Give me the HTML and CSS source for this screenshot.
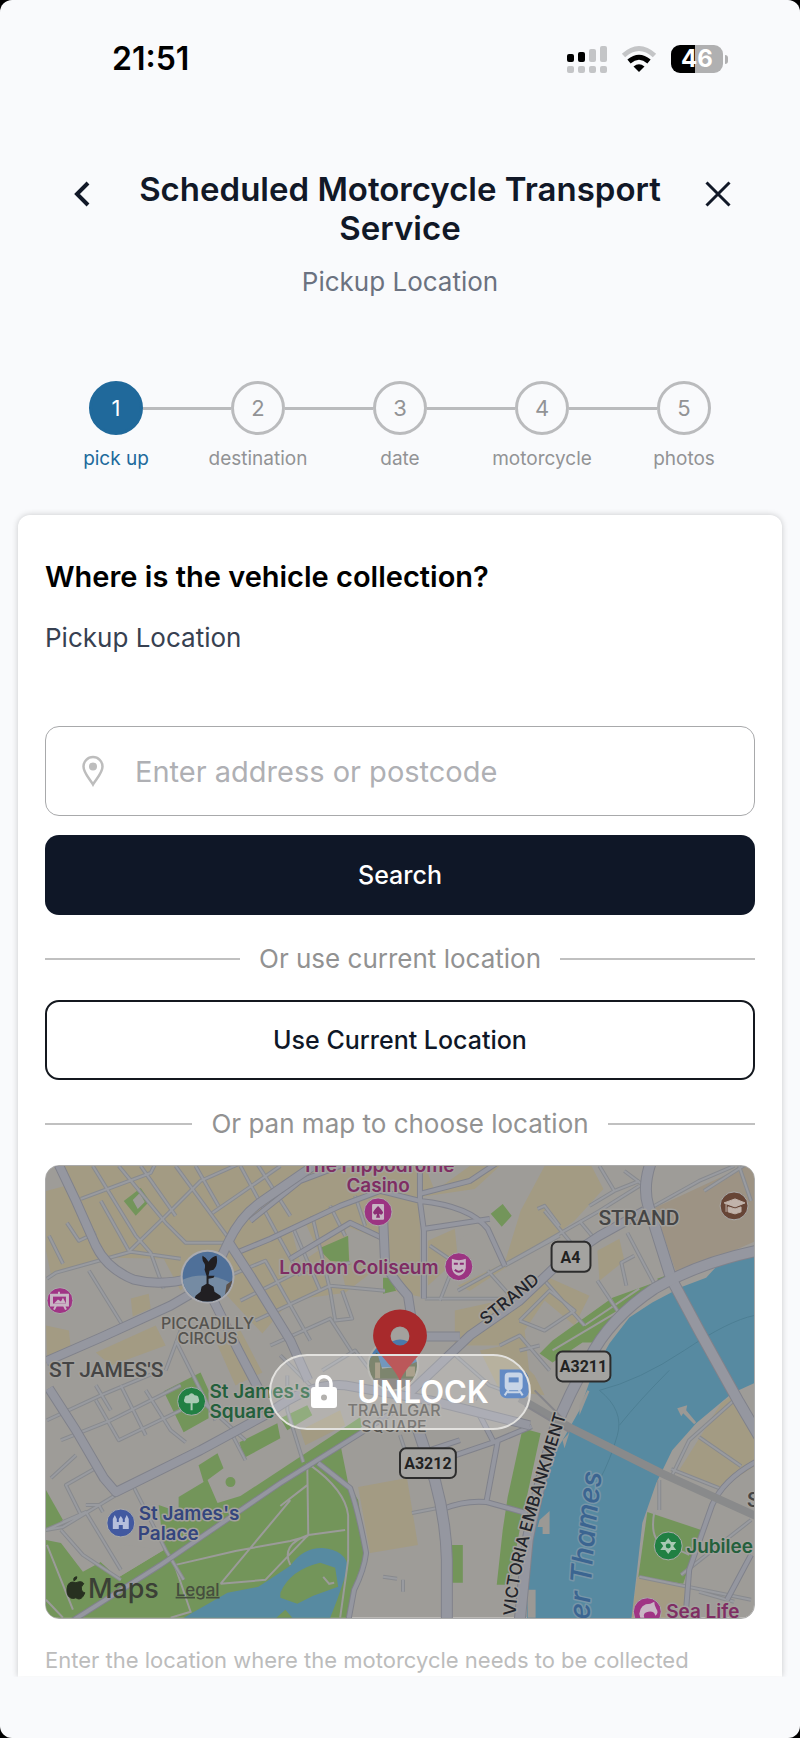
FILE: index.html
```html
<!DOCTYPE html>
<html lang="en">
<head>
<meta charset="utf-8">
<meta name="viewport" content="width=device-width, initial-scale=1">
<title>Scheduled Motorcycle Transport Service</title>
<link rel="stylesheet" href="styles.css">
</head>
<body>
<div class="screen">
  <div class="status">
    <span class="clock">21:51</span>
    <div class="status-icons">
      <svg width="40" height="28" viewBox="0 0 40 28" aria-hidden="true">
        <g fill="#000"><rect x="0" y="9" width="7" height="8" rx="2"/><rect x="11" y="7" width="7" height="10" rx="2"/></g>
        <g fill="#c4c5c7"><rect x="22" y="4" width="7" height="13" rx="2"/><rect x="33" y="1" width="7" height="16" rx="2"/>
        <rect x="0" y="21" width="7" height="7" rx="2"/><rect x="11" y="21" width="7" height="7" rx="2"/><rect x="22" y="21" width="7" height="7" rx="2"/><rect x="33" y="21" width="7" height="7" rx="2"/></g>
      </svg>
      <svg width="36" height="28" viewBox="0 0 36 28" aria-hidden="true" fill="none">
        <path d="M2.500 10.500Q18-3.500 33.500 10.500" stroke="#c4c5c7" stroke-width="5"/>
        <path d="M8 16.500Q18 8 28 16.500" stroke="#000" stroke-width="5"/>
        <path d="M18 27L12.500 21.500Q18 17 23.500 21.500Z" fill="#000"/>
      </svg>
      <div class="battery"><span class="battery-body">46</span><span class="battery-tip"></span></div>
    </div>
  </div>

  <header class="header">
    <button class="icon-btn" aria-label="Back"><svg width="18" height="28" viewBox="0 0 18 28"><path d="M15 3L4 14l11 11" fill="none" stroke="#111827" stroke-width="4"/></svg></button>
    <div class="titles">
      <h1>Scheduled Motorcycle Transport Service</h1>
      <p>Pickup Location</p>
    </div>
    <button class="icon-btn" aria-label="Close"><svg width="28" height="28" viewBox="0 0 28 28"><path d="M2.500 2.500l23 23M25.500 2.500l-23 23" fill="none" stroke="#111827" stroke-width="3"/></svg></button>
  </header>

  <ol class="steps">
    <li class="step current" aria-current="step"><span class="dot">1</span><span class="step-name">pick up</span></li>
    <li class="step"><span class="dot">2</span><span class="step-name">destination</span></li>
    <li class="step"><span class="dot">3</span><span class="step-name">date</span></li>
    <li class="step"><span class="dot">4</span><span class="step-name">motorcycle</span></li>
    <li class="step"><span class="dot">5</span><span class="step-name">photos</span></li>
  </ol>

  <main class="card">
    <h2>Where is the vehicle collection?</h2>
    <label class="field-label" for="address">Pickup Location</label>
    <div class="field">
      <svg width="24" height="32" viewBox="0 0 24 32" aria-hidden="true"><path d="M12 29.500C9 24 2.500 18 2.500 11.500a9.500 9.500 0 0 1 19 0C21.500 18 15 24 12 29.500Z" fill="none" stroke="#bdbdbd" stroke-width="2.500"/><circle cx="12" cy="11.500" r="4" fill="#bdbdbd"/></svg>
      <input id="address" type="text" placeholder="Enter address or postcode">
    </div>
    <button class="btn primary">Search</button>
    <div class="divider">Or use current location</div>
    <button class="btn outline">Use Current Location</button>
    <div class="divider">Or pan map to choose location</div>

    <div class="map">
      <svg class="map-art" viewBox="45 1165 710 453" role="img" aria-label="Map of central London">
        <defs>
          <g id="major">
            <path d="M56 1160L75 1200L95 1245Q106 1268 133 1279Q160 1286 192 1277"/>
            <path d="M45 1361L100 1337L170 1305L208 1283L228 1241Q240 1215 262 1200L320 1160"/>
            <path d="M228 1241L250 1275L290 1340L308 1380"/>
            <path d="M213 1300L238 1350L260 1392"/>
            <path d="M48 1388L75 1430L103 1478L115 1492L200 1450L270 1412Q310 1382 345 1385L430 1400L530 1425"/>
            <path d="M383 1215L385 1262Q390 1275 408 1295L415 1340"/>
            <path d="M410 1392L470 1335L520 1300L560 1262L600 1235L645 1210"/>
            <path d="M415 1336H460"/>
          </g>
          <g id="wide">
            <path d="M652 1160Q643 1185 649 1205L672 1278L700 1330L740 1402L760 1436"/>
            <path d="M415 1420L435 1480Q446 1520 447 1560V1622"/>
            <path d="M758 1250Q700 1262 655 1288Q610 1318 590 1358Q570 1392 555 1430Q540 1480 528 1540L520 1622"/>
          </g>
          <g id="medium">
            <path d="M70 1622L160 1565L280 1483L365 1430L395 1410"/>
            <path d="M318 1463L350 1488Q358 1510 366 1553Q364 1570 354 1590L348 1622"/>
            <path d="M760 1460Q725 1478 713 1505L690 1570L686 1622M752 1555L728 1600"/>
            <path d="M443 1509Q465 1500 487 1502L530 1514M498 1441L487 1500M532 1426L494 1442L450 1457M494 1442L480 1415M460 1440L430 1450"/>
            <path d="M420 1160V1200L424 1230V1298M340 1165L300 1180L250 1220M420 1200L380 1190L340 1205L270 1238L236 1252M420 1200Q470 1205 488 1228L505 1265"/>
            <path d="M420 1193L470 1180L500 1160M425 1228L490 1218M384 1238L350 1222L290 1258"/>
          </g>
          <g id="minor">
            <path d="M92 1165L135 1235L150 1252L163 1288M46 1278L55 1272L130 1251L180 1258M80 1198L150 1172L156 1160M128 1251L165 1215L200 1180L245 1160"/>
            <path d="M118 1165L165 1222L185 1242H228M140 1165L175 1215M175 1165L230 1240M195 1165L218 1205M240 1165L275 1230L300 1275M255 1160L290 1215M212 1212L280 1165M100 1200L128 1250M48 1235L62 1263M66 1222L78 1240L95 1232M88 1270L122 1325M205 1285L265 1260L310 1340M240 1300L300 1270L350 1262M255 1320L330 1285L385 1290M270 1345L330 1318L352 1352M292 1225L320 1290M312 1215L330 1290L335 1320L352 1318L342 1290M355 1195L365 1225M330 1205L345 1235"/>
            <path d="M425 1298H510M455 1262L440 1300M455 1262L430 1245M458 1290L530 1250L600 1210L640 1185M488 1270L515 1300M505 1265L560 1235M545 1210L578 1250M538 1208L545 1205L560 1225M600 1165L615 1190L590 1205M615 1190L640 1180M625 1170L645 1185M580 1220L595 1238L575 1245M628 1232L655 1283M635 1255L622 1262L627 1285M598 1280L618 1310M655 1205L700 1180L735 1165M705 1190L752 1160M740 1165L752 1200M520 1320L550 1290L575 1310L545 1330L520 1320M545 1280L585 1325M500 1345L520 1335L550 1370M520 1350L540 1345M450 1350L490 1385L530 1400M480 1385L475 1400"/>
            <path d="M46 1420L100 1395L160 1370M60 1440L110 1420L180 1385M75 1455L50 1478M95 1400L118 1440L180 1410M120 1385L145 1435M145 1390L170 1430L185 1442M100 1465L65 1485L80 1515L45 1530M85 1505H98L102 1512M45 1530L62 1527L115 1495M60 1530L82 1555L120 1580M62 1522L85 1512L120 1570M133 1487L165 1550L183 1580M95 1385L110 1410M180 1330L165 1370M175 1340L215 1420M200 1400L245 1440M232 1435L245 1460M287 1375V1410L303 1462M280 1355L310 1385M400 1435L405 1450M412 1513L443 1507M383 1577L397 1579M403 1580V1592M322 1370L355 1350L370 1370"/>
            <path d="M673 1475L690 1440L735 1400M700 1437L742 1466M660 1480V1510M672 1469L720 1488M640 1577L752 1600M700 1592L735 1602M682 1575L752 1520"/>
          </g>
          <path id="embankment" d="M516 1616C518 1560 548 1480 570 1403"/>
          <path id="thames" d="M590 1632Q590 1560 607 1440"/>
          <clipPath id="plaza-clip"><circle cx="393" cy="1365" r="24"/></clipPath>
          <clipPath id="circus-clip"><circle cx="207" cy="1276" r="25"/></clipPath>
        </defs>

        <rect class="land" x="45" y="1165" width="710" height="453"/>
        <g class="built">
          <path d="M62 1165H500L475 1188L420 1196V1296L392 1290L384 1262L345 1292L290 1300L262 1333L222 1290L205 1262L180 1290L163 1258L110 1257L50 1274L45 1250V1190Z"/>
          <path d="M521 1210L545 1165H592L604 1188L575 1220L540 1245L470 1290L458 1285L505 1262Z"/>
          <path d="M455 1310L510 1298L545 1275L590 1295L575 1325L545 1300L525 1330L530 1375L500 1345L455 1345Z"/>
          <path d="M598 1250L620 1238L625 1260L600 1280Z"/>
          <path d="M428 1240L455 1228L458 1258L428 1285ZM480 1350L505 1345L535 1375L545 1395L500 1390Z"/>
          <path d="M680 1470L722 1403L735 1394L757 1425V1465L722 1488Z"/>
          <path d="M358 1487L407 1478L418 1545L370 1553Z"/>
          <path d="M632 1618L638 1577L690 1586L684 1618Z"/>
          <path d="M45 1325L68 1330L70 1350L46 1358ZM95 1352L155 1325L165 1345L110 1365ZM130 1298L148 1293L150 1308L132 1316ZM215 1340L240 1330L262 1372L235 1385ZM300 1430L340 1410L345 1425L305 1445Z"/>
        </g>
        <path class="campus" d="M655 1207L757 1160V1240L678 1275Z"/>
        <g class="land">
          <path d="M345 1225L384 1240V1262L350 1262ZM290 1225L305 1222L318 1250L300 1262ZM45 1165H56L64 1185L45 1190ZM458 1240L484 1222L502 1262L455 1285L458 1262ZM425 1165H470L435 1190ZM320 1265L340 1262L345 1285H328Z"/>
        </g>
        <g class="park">
          <path d="M123 1200L140 1187L149 1200L135 1215Z"/>
          <path d="M318 1248L348 1235L349 1262L330 1260ZM383 1277H391L396 1290L383 1293ZM491 1213L503 1203L512 1215L502 1226Z"/>
          <path d="M163 1391L200 1372L208 1390V1418L183 1432ZM239 1442L277 1423L280 1438L243 1458ZM280 1418L307 1405L312 1415L287 1430Z"/>
          <path d="M198 1465L217 1453L223 1468L207 1480L217 1503L240 1496L360 1417L362 1428L341 1448L348 1483L358 1500L366 1553L348 1618H45V1540L60 1543L82 1572L100 1562L117 1578L163 1550L158 1505L178 1512V1497L203 1482Z"/>
          <path d="M45 1490L62 1520L45 1532Z"/>
          <path d="M540 1353L553 1340L613 1297L652 1283L648 1290L617 1315L593 1342H583L553 1362ZM658 1278L666 1275V1281L660 1282Z"/>
          <path d="M523 1428L541 1433L520 1530L510 1585H497L503 1530L508 1497ZM452 1545H463V1583H452Z"/>
          <path d="M648 1512L702 1530L684 1584L639 1577Z"/>
        </g>
        <path class="land" d="M132 1199L139 1192L144 1201L137 1208ZM100 1562L125 1545L163 1550L117 1578ZM219 1482L232 1475L235 1495L224 1498Z"/>
        <circle cx="230" cy="1482" r="5" fill="#73955a"/>
        <g class="water">
          <path d="M757 1253L720 1263L707 1277L683 1286L653 1302L630 1317L610 1343L593 1373L580 1410L563 1440L552 1457L540 1503L530 1550L527 1620H632L637 1577L643 1523L657 1483L673 1450L697 1423L733 1393L757 1382Z"/>
          <path d="M183 1618L227 1593L258 1587L290 1566Q302 1548 322 1548Q346 1550 348 1568L337 1600L330 1618Z"/>
        </g>
        <path d="M280 1593Q290 1570 320 1563L335 1568L338 1587L313 1596L297 1604L280 1598ZM276 1618L285 1610L292 1618Z" fill="#73955a"/>
        <g fill="none" stroke="#4c7e94" stroke-width="1"><path d="M600 1390Q640 1380 685 1350T755 1315M600 1390Q625 1410 618 1435T600 1480M670 1370Q640 1400 620 1425"/></g>
        <g fill="none" stroke="#9b9b99" stroke-width="2">
          <path d="M307 1463L308 1535L265 1580L220 1584M308 1535L345 1530M310 1465Q345 1490 348 1515V1560L340 1618M175 1565L235 1551L290 1541L308 1536M173 1562L190 1612L170 1618M220 1584L290 1500M280 1506L307 1485M308 1535Q280 1545 290 1565M46 1545L72 1610M45 1600L62 1618M323 1577L329 1584L334 1583"/>
          <path d="M553 1350L620 1310M585 1325L640 1288M608 1292L618 1310M655 1512Q650 1540 665 1545T690 1555"/>
        </g>
        <g fill="#9b9995"><path d="M678 1408L688 1405L687 1410L697 1422L695 1424L684 1413L682 1416ZM540 1520L550 1511V1534H543V1527H538ZM580 1405L588 1390L590 1391L580 1415ZM563 1440L570 1432L565 1448ZM528 1590H536V1618H528Z"/></g>

        <use href="#minor" class="road-edge edge-s"/><use href="#minor" class="road fill-s"/>
        <use href="#medium" class="road-edge edge-m"/><use href="#medium" class="road fill-m"/>
        <use href="#major" class="road-edge edge-l"/><use href="#major" class="road fill-l"/>
        <use href="#wide" class="road-edge edge-w"/><use href="#wide" class="road fill-w"/>
        <path d="M520 1398L570 1427L662 1473L757 1516" fill="none" stroke="#898a8b" stroke-width="8"/>
        <path d="M535 1390L565 1420M525 1405L570 1432" fill="none" stroke="#85858a" stroke-width="2"/>

        <g class="shield">
          <rect x="552" y="1241" width="39" height="30" rx="6"/><rect x="557" y="1351" width="54" height="30" rx="6"/><rect x="400" y="1448" width="56" height="30" rx="6"/>
        </g>
        <g class="shield-text"><text x="571" y="1262">A4</text><text x="584" y="1372">A3211</text><text x="428" y="1469">A3212</text></g>

        <g class="district">
          <text x="48" y="1377">ST JAMES'S</text><text x="599" y="1224">STRAND</text><text x="748" y="1507">S</text>
        </g>
        <g class="street">
          <text transform="translate(486 1325) rotate(-39)">STRAND</text>
          <text><textPath href="#embankment">VICTORIA EMBANKMENT</textPath></text>
        </g>
        <text class="river"><textPath href="#thames" startOffset="12">er Thames</textPath></text>
        <g class="area"><text x="207" y="1328">PICCADILLY</text><text x="207" y="1344">CIRCUS</text><text x="394" y="1416">TRAFALGAR</text><text x="394" y="1432">SQUARE</text></g>
        <g class="poi pink"><text class="mid" x="378" y="1171">The Hippodrome</text><text class="mid" x="378" y="1191">Casino</text><text x="279" y="1273">London Coliseum</text><text x="667" y="1618">Sea Life</text></g>
        <g class="poi green"><text x="209" y="1398">St James's</text><text x="209" y="1418">Square</text><text x="687" y="1553">Jubilee</text></g>
        <g class="poi blue"><text x="138" y="1520">St James's</text><text x="137" y="1540">Palace</text></g>

        <g stroke="#aaa" stroke-width="1">
          <circle cx="378" cy="1211" r="14" fill="#9c3482"/><circle cx="459" cy="1266" r="14" fill="#9c3482"/><circle cx="59" cy="1300" r="13" fill="#a03485"/><circle cx="648" cy="1612" r="14" fill="#a03485"/>
          <circle cx="191" cy="1401" r="14" fill="#218043"/><circle cx="669" cy="1546" r="14" fill="#218043"/>
          <circle cx="120" cy="1523" r="14" fill="#4259a0"/><circle cx="735" cy="1205" r="14" fill="#674536"/>
        </g>
        <g fill="#c8b6c4">
          <rect x="372" y="1203" width="12" height="16" rx="1"/><path fill="#8c2d75" d="M378 1205Q373 1210 373 1212Q374 1215 377 1213L376 1217H380L379 1213Q382 1215 383 1212Q383 1210 378 1205Z"/>
          <path d="M452 1258Q459 1261 466 1258V1267Q465 1274 459 1275Q453 1274 452 1267Z"/><path d="M454 1263h4M460 1263h4M455 1269Q459 1273 463 1269" stroke="#8c2d75" stroke-width="2" fill="none"/>
          <path d="M50 1294H67V1305H50ZM53 1309L55 1305M65 1309L63 1305M58 1291V1294" stroke="#c8b6c4" stroke-width="2"/><path d="M52 1296H65V1303H52Z" fill="#a03485"/><path d="M53 1303L57 1299L60 1301L62 1297L65 1303Z"/>
          <path d="M640 1614Q641 1604 651 1604L655 1602Q655 1606 657 1609Q660 1613 656 1616Q655 1611 649 1612Q643 1613 645 1618H641Z"/>
        </g>
        <path d="M190 1410V1403H186Q182 1402 184 1398Q184 1395 188 1395Q191 1391 194 1395Q198 1395 198 1398Q200 1402 196 1403H192V1410Z" fill="#a9c9b4"/>
        <path d="M669 1538L672 1542L677 1542L674 1546L677 1550L672 1550L669 1554L666 1550L661 1550L664 1546L661 1542L666 1542Z" fill="#a9c9b4"/><circle cx="669" cy="1546" r="2.500" fill="#218043"/>
        <path d="M112 1529V1519L114 1515L116 1519V1522H118V1519L120 1516L122 1519V1522H124V1519L126 1515L128 1519V1529H122V1525H118V1529Z" fill="#b6bfdc"/>
        <path d="M725 1202L736 1198L746 1202L736 1206ZM729 1206L736 1208L742 1206V1211L736 1213L729 1211ZM727 1203V1211" fill="#c1b3ab" stroke="#c1b3ab" stroke-width="1"/>

        <circle cx="207" cy="1276" r="27" fill="#aaabb0"/>
        <g clip-path="url(#circus-clip)">
          <rect x="180" y="1250" width="54" height="54" fill="#4f7099"/><path d="M180 1280Q205 1268 234 1284V1304H180Z" fill="#758ba3"/><path d="M226 1284L234 1278V1304H223Z" fill="#5c5148"/>
          <path d="M202 1255Q206 1257 208 1261Q211 1256 216 1255Q218 1264 213 1269L209 1270L208 1275L214 1275L213 1277L208 1278V1283L213 1286L214 1291L220 1295L222 1304H192L195 1295L200 1291L201 1286L206 1283V1275L204 1269Q205 1265 204 1263Q201 1260 202 1255Z" fill="#211f22"/>
        </g>
        <circle cx="393" cy="1365" r="26" fill="#aaa9a3"/>
        <g clip-path="url(#plaza-clip)"><rect x="367" y="1339" width="52" height="28" fill="#4b7aab"/><path d="M367 1360L377 1352L382 1368L405 1366L420 1360V1392H367Z" fill="#596346"/><path d="M375 1362H380V1378H375ZM406 1366H415V1376H406Z" fill="#92876c"/><path d="M367 1378H420V1392H367Z" fill="#716e69"/></g>
        <path d="M500 1369H520A10 10 0 0 1 529 1379V1392A7 7 0 0 1 522 1398H507A7 7 0 0 1 500 1391Z" fill="#386bb5"/>
        <path d="M509 1373H519A3 3 0 0 1 522 1376V1386A3 3 0 0 1 519 1389H509A3 3 0 0 1 506 1386V1376A3 3 0 0 1 509 1373ZM509 1389L505 1395M519 1389L523 1395M508 1392H520" fill="#b9cae0" stroke="#b9cae0" stroke-width="2"/><path d="M509 1377H519V1382H509Z" fill="#386bb5"/>
        <circle cx="400" cy="1336" r="9" fill="#a3a19d"/><path d="M392 1341Q400 1337 408 1341Q400 1350 392 1341Z" fill="#4b7aab"/>
        <path d="M400 1381C394 1364 373 1353 373 1335A27 26 0 0 1 427 1335C427 1353 406 1364 400 1381ZM400 1326A9 9 0 0 0 400 1345A9 9 0 0 0 400 1326Z" fill="#a82a2c" fill-rule="evenodd"/>

        <path d="M76 1577Q76 1580 73 1581Q72 1577 76 1577M66 1591C66 1583 70 1581 75 1583C79 1581 82 1582 83 1584C79 1587 80 1592 84 1593C82 1598 79 1601 75 1598C70 1600 66 1597 66 1591Z" fill="#273020" stroke="#273020"/>
        <text class="brand" x="87" y="1598">Maps</text>
        <text class="legal" x="175" y="1596">Legal</text>
      </svg>
      <button class="unlock">
        <svg width="26" height="34" viewBox="0 0 26 34" aria-hidden="true"><path d="M6 14V8.500a7 7 0 0 1 14 0V14" fill="none" stroke="#fff" stroke-width="3.500"/><path fill="#fff" fill-rule="evenodd" d="M3 12H23a3 3 0 0 1 3 3V30a3 3 0 0 1-3 3H3a3 3 0 0 1-3-3V15a3 3 0 0 1 3-3ZM13 19.500a3 3 0 0 0 0 6a3 3 0 0 0 0-6Z"/></svg>
        UNLOCK
      </button>
    </div>
    <p class="hint">Enter the location where the motorcycle needs to be collected</p>
  </main>
</div>
</body>
</html>
```
FILE: styles.css
```css
* { box-sizing: border-box; }
body { margin: 0; background: #000; font-family: Inter, "Liberation Sans", sans-serif; color: #111827; }
h1, h2, p, ol { margin: 0; padding: 0; }
button, input { font: inherit; color: inherit; }
button { cursor: pointer; }

.screen { min-height: 100vh; background: #f9fafc; border-radius: 12px; padding-bottom: 60px; overflow: hidden; }

.status { display: flex; justify-content: space-between; align-items: center; padding: 38px 72px 0 112px; height: 80px; }
.clock { font-size: 32px; font-weight: 600; line-height: 40px; color: #000; }
.status-icons { display: flex; align-items: center; gap: 14px; }
.battery { display: flex; align-items: center; gap: 2px; }
.battery-body { width: 52px; line-height: 28px; border-radius: 9px; text-align: center; font-size: 24px; font-weight: 700; color: #fff; background: linear-gradient(90deg, #000 46%, #b0b0b1 46%); }
.battery-tip { width: 3px; height: 9px; border-radius: 0 3px 3px 0; background: #b0b0b1; }

.header { display: flex; justify-content: space-between; align-items: flex-start; padding: 90px 68px 0; }
.icon-btn { width: 28px; height: 48px; padding: 0; border: 0; background: none; display: flex; align-items: center; justify-content: center; }
.titles { flex: 1; padding: 0 24px; text-align: center; }
h1 { font-size: 33px; line-height: 39px; font-weight: 600; }
.titles p { margin-top: 18px; font-size: 26px; line-height: 32px; color: #6b7280; }

.steps { display: grid; grid-template-columns: repeat(5, 1fr); list-style: none; padding: 83px 45px 0; }
.step { display: grid; grid-template-columns: 1fr auto 1fr; align-items: center; color: #929395; }
.step::before, .step::after { content: ""; height: 3px; background: #babbbd; }
.step::before { order: 0; }
.dot { order: 1; width: 54px; height: 54px; border: 3px solid #babbbd; border-radius: 50%; display: grid; place-items: center; font-size: 22px; }
.step::after { order: 2; }
.step:first-child::before, .step:last-child::after { background: none; }
.step-name { order: 3; grid-column: 1 / -1; text-align: center; font-size: 19px; line-height: 24px; margin-top: 12px; }
.current { color: #20699b; }
.current .dot { background: #20699b; border-color: #20699b; color: #fff; }

.card { margin: 44px 18px 0; padding: 44px 27px 0; background: #fff; border-radius: 12px 12px 0 0; box-shadow: 0 0 6px rgba(0, 0, 0, 0.2); clip-path: inset(-8px -8px 0); display: flex; flex-direction: column; }
h2 { font-size: 29px; line-height: 36px; font-weight: 600; color: #000; }
.field-label { margin-top: 27px; font-size: 26px; line-height: 32px; color: #374151; }
.field { margin-top: 72px; height: 90px; border: 1px solid #a8a9ab; border-radius: 14px; display: flex; align-items: center; gap: 30px; padding: 0 35px; }
.field input { flex: 1; min-width: 0; border: 0; outline: 0; padding: 0; background: none; font-size: 29px; }
.field input::placeholder { color: #afb0b4; opacity: 1; }
.btn { height: 80px; border-radius: 14px; font-size: 25px; font-weight: 500; }
.primary { margin-top: 19px; border: 0; background: #0f1727; color: #fff; }
.outline { border: 2px solid #14181f; background: #fff; color: #0f1727; }
.divider { display: flex; align-items: center; gap: 19px; height: 85px; font-size: 26px; color: #929292; padding-top: 2px; }
.divider::before, .divider::after { content: ""; flex: 1; height: 2px; background: #c0c0c0; }

.map { display: grid; place-items: center; border-radius: 14px; overflow: hidden; border: 1px solid #aaa; }
.map-art { grid-area: 1 / 1; display: block; width: 100%; height: auto; }
.unlock { grid-area: 1 / 1; z-index: 1; height: 76px; padding: 0 40px; display: flex; align-items: center; gap: 20px; border: 2px solid #e3e2df; border-radius: 38px; background: rgba(255, 255, 255, 0.22); color: #fff; font-size: 31px; font-weight: 600; }
.hint { margin-top: 26px; padding-bottom: 2px; font-size: 22px; line-height: 30px; color: #bcbcbc; }

.land { fill: #9e9c98; }
.built { fill: #a39b83; }
.campus { fill: #9d9384; }
.park { fill: #73955a; }
.water { fill: #578aa1; }
.road, .road-edge { fill: none; stroke-linejoin: round; }
.road { stroke: #9597a0; }
.road-edge { stroke: #80828b; }
.edge-s { stroke-width: 4px; stroke: #888a8e; }
.fill-s { stroke-width: 2px; stroke: #999ba0; }
.edge-m { stroke-width: 6px; }
.fill-m { stroke-width: 4px; }
.edge-l { stroke-width: 10px; }
.fill-l { stroke-width: 8px; }
.edge-w { stroke-width: 12px; }
.fill-w { stroke-width: 10px; }
.shield { fill: #a4a3a0; stroke: #2c2c2c; stroke-width: 2px; }
.shield-text { font: 700 16px Roboto, sans-serif; fill: #222; text-anchor: middle; }
.district { font: 500 21px Roboto, sans-serif; fill: #454545; }
.street { font: 500 17px Inter, sans-serif; fill: #22242b; }
.district, .street, .area, .poi, .river { paint-order: stroke; stroke: #a3a19d; stroke-width: 3px; stroke-linejoin: round; }
.area { font: 500 16px Inter, sans-serif; fill: #55534f; text-anchor: middle; }
.poi { font: 600 19px Inter, sans-serif; }
.mid { text-anchor: middle; }
.pink { fill: #7f2d63; }
.green { fill: #24603c; }
.blue { fill: #34457e; }
.river { font: italic 500 29px Inter, sans-serif; fill: #3b6591; stroke: #7796a8; }
.brand { font: 500 27px Inter, sans-serif; fill: #3b4036; }
.legal { font: 500 17px Inter, sans-serif; fill: #464e3e; text-decoration: underline; }
```
